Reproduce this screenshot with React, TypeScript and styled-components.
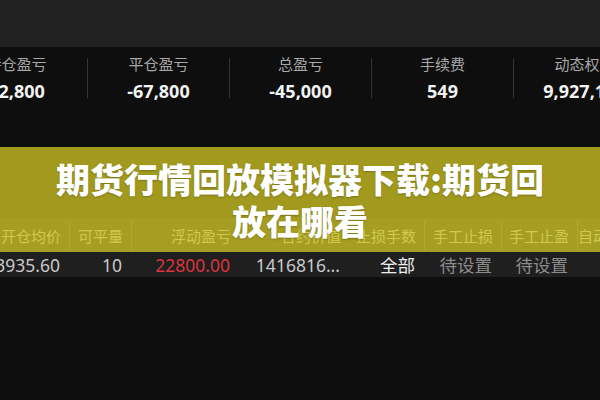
import { Fragment } from "react";
import styled, { createGlobalStyle } from "styled-components";

const GlobalStyle = createGlobalStyle`
  html, body {
    margin: 0;
    padding: 0;
    background-color: #0e0e0e;
  }
  body {
    font-family: "Noto Sans", "Noto Sans CJK SC", sans-serif;
  }
`;

const Screen = styled.div`
  position: relative;
  width: 600px;
  height: 400px;
  overflow: hidden;
  background-color: #0e0e0e;
`;

const TopBar = styled.div`
  height: 47px;
  background-color: #212121;
`;

const StatsRow = styled.div`
  display: flex;
  align-items: center;
  height: 62px;
  margin-left: -54px;
`;

const StatItem = styled.div`
  width: 141px;
  flex-shrink: 0;
  display: flex;
  flex-direction: column;
  align-items: center;
  gap: 6px;
`;

const StatLabel = styled.span`
  font-size: 15px;
  line-height: 20px;
  color: #a8a8a8;
`;

const StatValue = styled.span`
  font-size: 18px;
  line-height: 22px;
  font-weight: 700;
  color: #f2f2f2;
  white-space: nowrap;
`;

const StatDivider = styled.div`
  width: 1px;
  height: 40px;
  flex-shrink: 0;
  background-color: #343434;
`;

const Table = styled.div`
  margin-top: 109px;
  margin-left: -10px;
`;

const Row = styled.div<{ $head?: boolean }>`
  display: grid;
  grid-template-columns: 80px 62px 108px 110px 75px 77px 76px 1fr;
  height: ${(p) => (p.$head ? "34px" : "25px")};
  background-color: ${(p) => (p.$head ? "#1a1a1a" : "#1f1f1f")};
  align-items: center;
`;

const HeadCell = styled.div<{ $split?: boolean }>`
  position: relative;
  padding-right: 9px;
  text-align: right;
  font-size: 15px;
  color: #9a9a9a;
  white-space: nowrap;

  &::after {
    content: "";
    display: ${(p) => (p.$split ? "block" : "none")};
    position: absolute;
    right: 0;
    top: -4px;
    bottom: -4px;
    width: 1px;
    background-color: #3a3a3a;
  }
`;

const Cell = styled.div<{ $tone?: "red" | "bright" | "dim" }>`
  padding-right: 10px;
  text-align: right;
  font-size: 17.5px;
  white-space: nowrap;
  overflow: hidden;
  color: ${(p) =>
    p.$tone === "red"
      ? "#d8353d"
      : p.$tone === "bright"
      ? "#ececec"
      : p.$tone === "dim"
      ? "#8c8c8c"
      : "#c9c9c9"};
`;

const Banner = styled.div`
  position: absolute;
  left: 0;
  right: 0;
  top: 147px;
  height: 105px;
  display: flex;
  align-items: center;
  justify-content: center;
  background-color: rgba(236, 223, 40, 0.67);
`;

const BannerTitle = styled.h1`
  margin: 0;
  font-family: "Noto Sans CJK SC", sans-serif;
  font-size: 34px;
  line-height: 42px;
  font-weight: 900;
  color: #ffffff;
  text-align: center;
  text-shadow: 0 1px 2px rgba(0, 0, 0, 0.25);
`;

const stats = [
  { label: "持仓盈亏", value: "22,800" },
  { label: "平仓盈亏", value: "-67,800" },
  { label: "总盈亏", value: "-45,000" },
  { label: "手续费", value: "549" },
  { label: "动态权益", value: "9,927,150" },
];

const headers = ["开仓均价", "可平量", "浮动盈亏", "合约价值", "止损手数", "手工止损", "手工止盈", "自动止盈"];

function App() {
  return (
    <Screen>
      <GlobalStyle />
      <TopBar />
      <StatsRow>
        {stats.map((s, i) => (
          <Fragment key={s.label}>
            {i > 0 && <StatDivider />}
            <StatItem>
              <StatLabel>{s.label}</StatLabel>
              <StatValue>{s.value}</StatValue>
            </StatItem>
          </Fragment>
        ))}
      </StatsRow>
      <Table>
        <Row $head>
          {headers.map((h, i) => (
            <HeadCell key={h} $split={i !== 2 && i !== 3 && i < 7}>
              {h}
            </HeadCell>
          ))}
        </Row>
        <Row>
          <Cell>3935.60</Cell>
          <Cell>10</Cell>
          <Cell $tone="red">22800.00</Cell>
          <Cell>1416816...</Cell>
          <Cell $tone="bright">全部</Cell>
          <Cell $tone="dim">待设置</Cell>
          <Cell $tone="dim">待设置</Cell>
          <Cell />
        </Row>
      </Table>
      <Banner>
        <BannerTitle>
          期货行情回放模拟器下载:期货回
          <br />
          放在哪看
        </BannerTitle>
      </Banner>
    </Screen>
  );
}

export default App;
